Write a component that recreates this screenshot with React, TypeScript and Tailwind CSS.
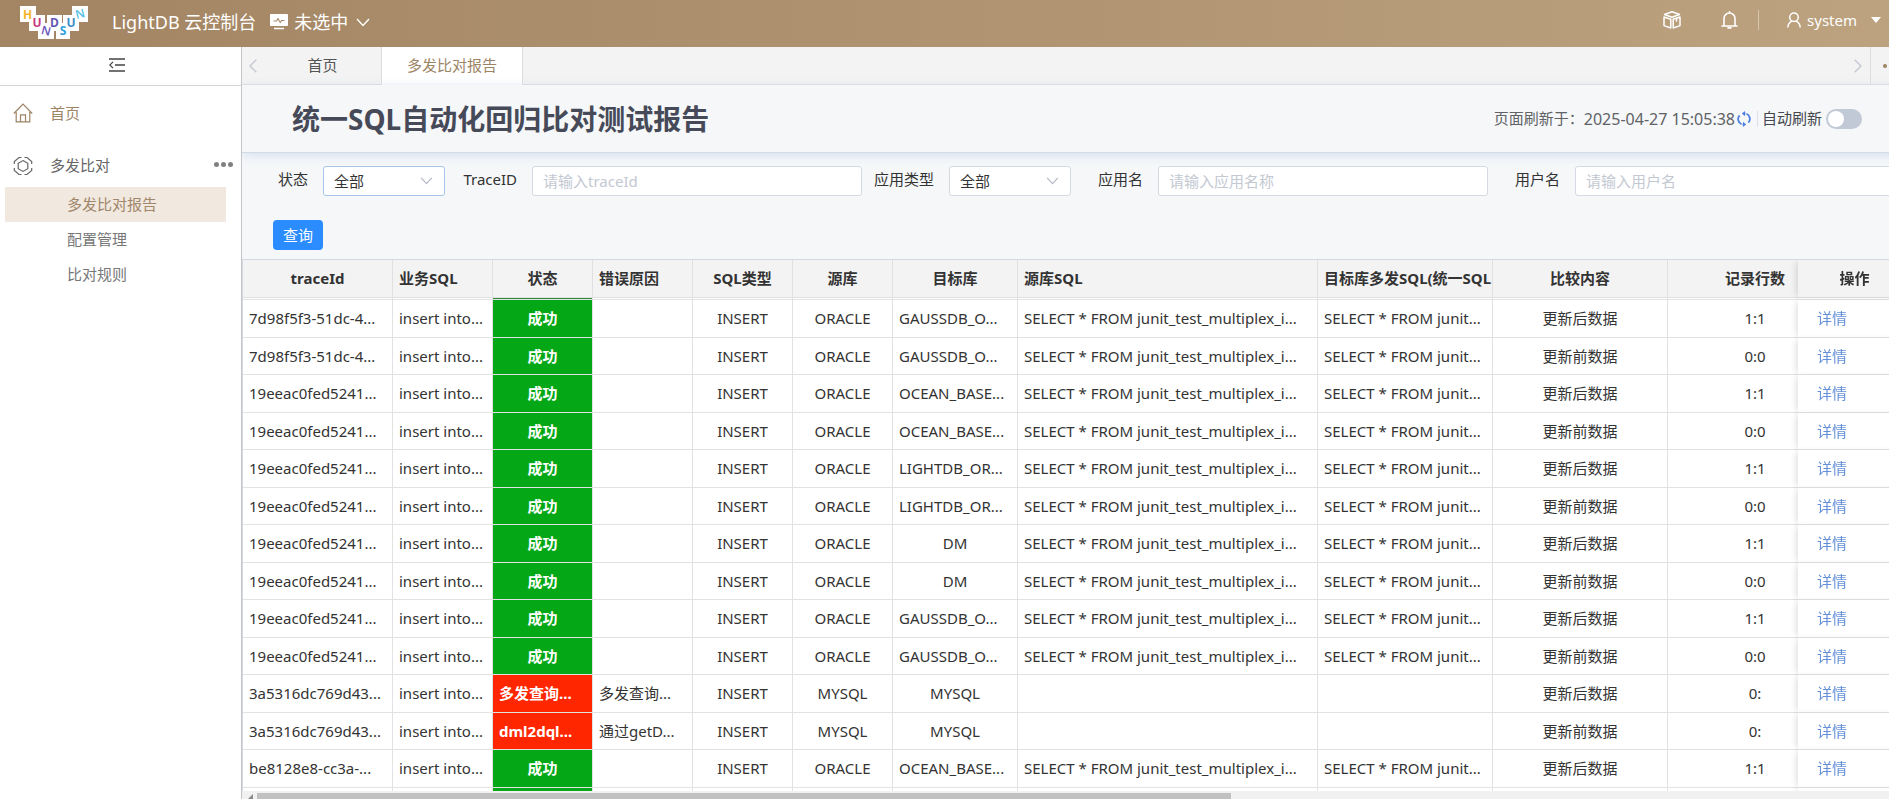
import { useState } from "react";
import type { ReactNode } from "react";

type Row = {
  traceId: string;
  status: string;
  reason?: string;
  source: string;
  target: string;
  compare: string;
  count: string;
};

const AFTER = "更新后数据";
const BEFORE = "更新前数据";

const rows: Row[] = [
  { traceId: "7d98f5f3-51dc-4...", status: "成功", source: "ORACLE", target: "GAUSSDB_O...", compare: AFTER, count: "1:1" },
  { traceId: "7d98f5f3-51dc-4...", status: "成功", source: "ORACLE", target: "GAUSSDB_O...", compare: BEFORE, count: "0:0" },
  { traceId: "19eeac0fed5241...", status: "成功", source: "ORACLE", target: "OCEAN_BASE...", compare: AFTER, count: "1:1" },
  { traceId: "19eeac0fed5241...", status: "成功", source: "ORACLE", target: "OCEAN_BASE...", compare: BEFORE, count: "0:0" },
  { traceId: "19eeac0fed5241...", status: "成功", source: "ORACLE", target: "LIGHTDB_OR...", compare: AFTER, count: "1:1" },
  { traceId: "19eeac0fed5241...", status: "成功", source: "ORACLE", target: "LIGHTDB_OR...", compare: BEFORE, count: "0:0" },
  { traceId: "19eeac0fed5241...", status: "成功", source: "ORACLE", target: "DM", compare: AFTER, count: "1:1" },
  { traceId: "19eeac0fed5241...", status: "成功", source: "ORACLE", target: "DM", compare: BEFORE, count: "0:0" },
  { traceId: "19eeac0fed5241...", status: "成功", source: "ORACLE", target: "GAUSSDB_O...", compare: AFTER, count: "1:1" },
  { traceId: "19eeac0fed5241...", status: "成功", source: "ORACLE", target: "GAUSSDB_O...", compare: BEFORE, count: "0:0" },
  { traceId: "3a5316dc769d43...", status: "多发查询...", reason: "多发查询...", source: "MYSQL", target: "MYSQL", compare: AFTER, count: "0:" },
  { traceId: "3a5316dc769d43...", status: "dml2dql...", reason: "通过getD...", source: "MYSQL", target: "MYSQL", compare: BEFORE, count: "0:" },
  { traceId: "be8128e8-cc3a-...", status: "成功", source: "ORACLE", target: "OCEAN_BASE...", compare: AFTER, count: "1:1" },
];

const columns = [
  { title: "traceId", col: "w-[150px]", align: "text-center" },
  { title: "业务SQL", col: "w-[100px]", align: "text-left" },
  { title: "状态", col: "w-[100px]", align: "text-center" },
  { title: "错误原因", col: "w-[100px]", align: "text-left" },
  { title: "SQL类型", col: "w-[100px]", align: "text-center" },
  { title: "源库", col: "w-[100px]", align: "text-center" },
  { title: "目标库", col: "w-[125px]", align: "text-center" },
  { title: "源库SQL", col: "w-[300px]", align: "text-left" },
  { title: "目标库多发SQL(统一SQL", col: "w-[175px]", align: "text-left" },
  { title: "比较内容", col: "w-[175px]", align: "text-center" },
  { title: "记录行数", col: "w-[175px]", align: "text-center" },
];

// a shortened value fills its cell, so it starts at the left edge
const centered = (text: string) => (text.endsWith("...") ? "text-left" : "text-center");

const Logo = () => (
  <svg width="68" height="33" viewBox="0 0 68 33" aria-label="HUNDSUN" className="shrink-0">
    <g fill="#fff">
      <rect x="0" y="0" width="16" height="16" />
      <rect x="9" y="9" width="16" height="16" />
      <rect x="18" y="17" width="16" height="16" />
      <rect x="27" y="9" width="15" height="16" />
      <rect x="36" y="17" width="14" height="16" />
      <rect x="43" y="9" width="16" height="16" />
      <rect x="52" y="0" width="16" height="16" />
    </g>
    <g fontFamily="Open Sans, sans-serif" fontWeight="700" fontSize="12" textAnchor="middle">
      <text x="7.500" y="13" fill="#f6b62c">H</text>
      <text x="17" y="21" fill="#c8397f">U</text>
      <text x="26" y="29" fontWeight="600" fill="#6c55b8" transform="rotate(14 26 25)">N</text>
      <text x="34.500" y="21" fill="#6457b4">D</text>
      <text x="43" y="29" fill="#2ea1dc">S</text>
      <text x="51" y="21" fill="#3b8ec8">U</text>
      <text x="60" y="12" fontWeight="600" fill="#55c2e6" transform="rotate(-14 60 8)">N</text>
    </g>
  </svg>
);

const ChevronDown = ({ className }: { className: string }) => (
  <svg viewBox="0 0 14 9" fill="none" stroke="currentColor" strokeWidth="1.4" className={className}>
    <path d="M1 1l6 6.5L13 1" />
  </svg>
);

const Header = () => (
  <header className="flex h-[47px] shrink-0 items-center bg-linear-to-r from-[#a38563] to-[#bca27f] pl-5 pr-2 text-white">
    <div className="flex items-center pb-[3px]">
      <Logo />
      <h1 className="ml-6 text-[18px] leading-6">LightDB 云控制台</h1>
      <button className="ml-3.5 flex items-center text-[18px] leading-6">
        <svg width="18" height="16" viewBox="0 0 18 16" className="mr-1.5">
          <rect width="18" height="12" rx="1" fill="#fff" />
          <path d="M3.500 7h3l1.500-2.500 2.200 4 1.300-2h3" fill="none" stroke="#a78967" strokeWidth="1.100" />
          <path d="M4 14.500h10" stroke="#fff" strokeWidth="1.500" />
        </svg>
        未选中
        <ChevronDown className="ml-2 h-[9px] w-[14px]" />
      </button>
    </div>
    <div className="ml-auto flex items-center pb-[7px]">
      <button aria-label="资源">
        <svg width="18" height="18" viewBox="0 0 18 18" fill="none" stroke="#fff" strokeWidth="1.500" strokeLinejoin="round">
          <path d="M9 .8l7.500 2.700L9 6.200 1.500 3.500z" />
          <path d="M1 6l6.800 2.300V17L1 14.600zM17 6l-6.800 2.300V17L17 14.600z" />
          <path d="M13.500 7.200v3.500" />
        </svg>
      </button>
      <button aria-label="通知" className="ml-10">
        <svg width="17" height="18" viewBox="0 0 17 18" fill="none" stroke="#fff" strokeWidth="1.600" strokeLinecap="round">
          <path d="M8.500 .8v1.200M3 14.800V7.500a5.500 5.500 0 0 1 11 0v7.300M1 15h15M7 16.900h3" />
        </svg>
      </button>
      <span className="ml-5 h-5 w-px bg-white/40" />
      <button className="ml-7 flex items-center text-[15px] leading-5">
        <svg width="14" height="16" viewBox="0 0 14 16" fill="none" stroke="#fff" strokeWidth="1.500" strokeLinecap="round" className="mr-1.5">
          <circle cx="7" cy="5.200" r="4.300" />
          <path d="M4.800 9.200C2.600 10.300 1 12 .9 15M9.200 9.200c2.200 1.100 3.800 2.800 3.900 5.800" />
        </svg>
        system
        <svg width="10" height="6" viewBox="0 0 10 6" className="ml-3.5">
          <path d="M0 0h10L5 6z" fill="#fff" />
        </svg>
      </button>
    </div>
  </header>
);

const MenuIcon = ({ children }: { children: ReactNode }) => (
  <svg width="20" height="20" viewBox="0 0 20 20" fill="none" stroke="currentColor" strokeWidth="1.200" className="mr-[17px] shrink-0">
    {children}
  </svg>
);

const Sidebar = () => (
  <aside className="w-[242px] shrink-0 border-r border-[#c4c5c9] bg-white text-[15px] text-[#666]">
    <div className="flex h-[39px] items-center justify-center border-b border-[#d6d6d6] pb-0.5">
      <button aria-label="收起菜单" className="text-[#444]">
        <svg width="16" height="14" viewBox="0 0 16 14" fill="none" stroke="currentColor" strokeWidth="1.400" className="-ml-2">
          <path d="M0 1h16M6 7h10M0 13h16" />
          <path d="M4 3.800L.8 7 4 10.200" strokeWidth="1.200" />
        </svg>
      </button>
    </div>
    <nav>
      <a href="#home" className="flex h-[54px] items-center pl-[13px] text-[#9c8465]">
        <MenuIcon>
          <path d="M.8 10.500L10 1.200l9.200 9.300M3.200 9v9.800h13.600V9M7.500 18.800v-7h5v7" />
        </MenuIcon>
        首页
      </a>
      <a href="#compare" className="flex h-[47px] items-center pl-[13px] pr-2 pt-1">
        <MenuIcon>
          <path d="M10 4.600l4.800 2.700v5.400L10 15.400l-4.800-2.700V7.300z" />
          <path d="M1.300 8V5.500L6 1.500h2.500M11.500 1.500H14l4.700 4V8M18.700 12v2.500l-4.700 4h-2.500M8.500 18.500H6l-4.700-4V12" />
        </MenuIcon>
        多发比对
        <span className="ml-auto flex gap-0.5 pb-0.5">
          <i className="size-[5px] rounded-full bg-[#808080]" />
          <i className="size-[5px] rounded-full bg-[#808080]" />
          <i className="size-[5px] rounded-full bg-[#808080]" />
        </span>
      </a>
      <a href="#report" className="ml-[5px] mr-[15px] flex h-[35px] items-center bg-[#f1e8df] pl-[62px] text-[#a0866a]">
        多发比对报告
      </a>
      <a href="#config" className="flex h-[35px] items-center pl-[67px] text-[#777]">配置管理</a>
      <a href="#rules" className="flex h-[35px] items-center pl-[67px] text-[#777]">比对规则</a>
    </nav>
  </aside>
);

const Tabs = () => (
  <div className="flex h-[38px] bg-[#f3f3f3] text-[15px]">
    <button aria-label="向左" className="flex w-[26px] items-center border-b border-[#dcdcdc] pl-[7px]">
      <svg width="8" height="14" viewBox="0 0 8 14" fill="none" stroke="#c3c8d2" strokeWidth="1.400">
        <path d="M7.300 .8L1 7l6.300 6.200" />
      </svg>
    </button>
    <button className="w-[114px] border-b border-r border-[#dcdcdc] pr-1 text-[#555]">首页</button>
    <button className="w-[141px] border-r border-[#dcdcdc] bg-white pb-px text-[#9c8465]">多发比对报告</button>
    <div className="flex-1 border-b border-[#dcdcdc]" />
    <button aria-label="向右" className="flex w-4 items-center border-b border-[#dcdcdc]">
      <svg width="8" height="14" viewBox="0 0 8 14" fill="none" stroke="#c3c8d2" strokeWidth="1.400">
        <path d="M.7 .8L7 7 .7 13.200" />
      </svg>
    </button>
    <button aria-label="更多" className="flex w-[41px] items-center gap-[3px] border-b border-l border-[#dcdcdc] pl-3">
      <i className="size-1 rounded-full bg-[#9c8465]" />
      <i className="size-1 rounded-full bg-[#9c8465]" />
      <i className="size-1 rounded-full bg-[#9c8465]" />
    </button>
  </div>
);

const TitleBar = () => {
  const [auto, setAuto] = useState(false);

  return (
    <div className="relative z-10 flex h-[68px] items-center border-b border-[#d5dbe5] bg-[#f5f7f9] pl-[50px] pr-[49px] text-[15px] text-[#606266] shadow-[0_2px_10px_#d3dfef]">
      <h2 className="text-[28px] font-bold leading-9 text-[#464a58]">统一SQL自动化回归比对测试报告</h2>
      <span className="ml-auto">页面刷新于：</span>
      <span className="text-[16px]">2025-04-27 15:05:38</span>
      <button aria-label="刷新" className="ml-0.5">
        <svg width="14" height="16" viewBox="0 0 14 16" fill="none" stroke="#4f80e0" strokeWidth="1.800">
          <path d="M4.500 13.200A5.600 5.600 0 0 1 2.600 4.300M9.500 2.800a5.600 5.600 0 0 1 1.900 8.900M7 2.600a6 6 0 0 1 1.500.1M7 13.400a6 6 0 0 1-1.500-.1" />
          <path d="M8 0v5.200L4.800 2.600zM6 16v-5.200l3.200 2.600z" fill="#4f80e0" stroke="none" />
        </svg>
      </button>
      <span className="ml-1.5 mr-1 h-4 w-px bg-[#dcdfe6]" />
      <label htmlFor="auto" className="text-[#45474d]">自动刷新</label>
      <input
        id="auto"
        type="checkbox"
        role="switch"
        checked={auto}
        onChange={(e) => setAuto(e.target.checked)}
        className="ml-1 h-5 w-9 appearance-none rounded-full bg-[#c2c9d6] p-0.5 before:block before:size-4 before:rounded-full before:bg-white checked:bg-[#2d8cff] checked:before:ml-4"
      />
    </div>
  );
};

const SelectField = ({ id, label, labelClass, boxClass }: { id: string; label: string; labelClass: string; boxClass: string }) => (
  <div className="flex shrink-0 items-center gap-[15px]">
    <label htmlFor={id} className={`pb-1 ${labelClass}`}>{label}</label>
    <div className="relative">
      <select id={id} className={`h-[30px] w-[122px] appearance-none rounded-[3px] border bg-white pl-2.5 leading-7 text-[#333] ${boxClass}`}>
        <option>全部</option>
      </select>
      <ChevronDown className="pointer-events-none absolute right-3 top-[11px] h-2 w-[13px] text-[#b4bac6]" />
    </div>
  </div>
);

const TextField = ({ id, label, placeholder }: { id: string; label: string; placeholder: string }) => (
  <div className="flex shrink-0 items-center gap-[15px]">
    <label htmlFor={id} className="w-[72px] pb-1 text-right">{label}</label>
    <input
      id={id}
      placeholder={placeholder}
      className="h-[30px] w-[330px] rounded-[3px] border border-[#d5d9e1] bg-white px-2.5 placeholder:text-[#c3c8d2]"
    />
  </div>
);

const Filters = () => (
  <form className="bg-[#f5f7f9] text-[15px] text-[#333]" onSubmit={(e) => e.preventDefault()}>
    <div className="flex pl-9 pt-[13px]">
      <SelectField id="status" label="状态" labelClass="" boxClass="border-[#a9c4e6]" />
      <TextField id="trace" label="TraceID" placeholder="请输入traceId" />
      <SelectField id="appType" label="应用类型" labelClass="w-[72px] text-right" boxClass="border-[#d5d9e1]" />
      <TextField id="app" label="应用名" placeholder="请输入应用名称" />
      <TextField id="user" label="用户名" placeholder="请输入用户名" />
    </div>
    <button className="mb-[9px] ml-[31px] mt-6 h-[30px] w-[50px] rounded-[4px] bg-[#2b8cff] text-white">查询</button>
  </form>
);

const Cell = ({ align, className = "", children }: { align: string; className?: string; children?: ReactNode }) => (
  <td className={`whitespace-nowrap border-b border-r border-[#e2e2e4] px-1.5 pb-px ${align} ${className}`}>{children}</td>
);

const fixedShadow = "shadow-[-4px_0_6px_-2px_rgba(0,0,0,0.12)]";

const ResultTable = () => (
  <div className="min-h-0 flex-1 overflow-hidden border-l border-t border-[#d5d9e1] bg-white">
    <table className="w-[1713px] table-fixed border-separate border-spacing-0 text-[15px] leading-5 text-[#333]">
      <colgroup>
        {columns.map((c) => (
          <col key={c.title} className={c.col} />
        ))}
        <col className="w-[113px]" />
      </colgroup>
      <thead>
        <tr className="h-[38px] bg-[#f3f3f3]">
          {columns.map((c) => (
            <th key={c.title} className={`overflow-hidden whitespace-nowrap border-b border-r border-[#e0e0e0] px-1.5 pb-0.5 ${c.align}`}>
              {c.title}
            </th>
          ))}
          <th className={`sticky right-0 border-b border-[#dcdcdc] bg-[#f3f3f3] pb-0.5 text-center ${fixedShadow}`}>操作</th>
        </tr>
      </thead>
      <tbody>
        <tr aria-hidden="true" className="h-0.5">
          {columns.map((c) => (
            <td
              key={c.title}
              className={`border-b border-r border-[#e2e2e4] p-0 ${c.title === "状态" ? "bg-[#2f8a3c]" : ""}`}
            />
          ))}
          <td className="sticky right-0 border-b border-[#e2e2e4] bg-white p-0" />
        </tr>
        {rows.map((r, i) => {
          const ok = r.status === "成功";
          const hasSql = r.source === "ORACLE";
          return (
            <tr key={i} className="h-[37px] even:h-[38px]">
              <Cell align="text-left">{r.traceId}</Cell>
              <Cell align="text-left">insert into...</Cell>
              <Cell
                align={centered(r.status)}
                className={ok ? "bg-[#04a817] font-bold text-white" : "bg-[#ff2600] font-bold text-white"}
              >
                {r.status}
              </Cell>
              <Cell align="text-left">{r.reason}</Cell>
              <Cell align="text-center">INSERT</Cell>
              <Cell align="text-center">{r.source}</Cell>
              <Cell align={centered(r.target)}>{r.target}</Cell>
              <Cell align="text-left">{hasSql && "SELECT * FROM junit_test_multiplex_i..."}</Cell>
              <Cell align="text-left">{hasSql && "SELECT * FROM junit..."}</Cell>
              <Cell align="text-center">{r.compare}</Cell>
              <Cell align="text-center">{r.count}</Cell>
              <td className={`sticky right-0 border-b border-[#e2e2e4] bg-white pb-px pl-[19px] ${fixedShadow}`}>
                <a href="#detail" className="text-[#6390d8]">详情</a>
              </td>
            </tr>
          );
        })}
        {/* top of the next row, cut by the scroll bar */}
        <tr aria-hidden="true" className="h-[38px]">
          {columns.map((c) => (
            <td key={c.title} className={`border-r border-[#e2e2e4] p-0 ${c.title === "状态" ? "bg-[#04a817]" : ""}`} />
          ))}
          <td className={`sticky right-0 bg-white p-0 ${fixedShadow}`} />
        </tr>
      </tbody>
    </table>
  </div>
);

const ScrollTrack = () => (
  <div className="flex h-2 shrink-0 items-end bg-[#f1f1f1]">
    <svg width="15" height="5" viewBox="0 0 15 5">
      <path d="M11 0v5H6z" fill="#8a8a8a" />
    </svg>
    <div className="h-1.5 w-7/12 bg-[#c1c1c1]" />
  </div>
);

export default function App() {
  return (
    <div className="flex h-screen flex-col overflow-hidden bg-white font-['Noto_Sans','Noto_Sans_CJK_SC',sans-serif]">
      <Header />
      <div className="flex min-h-0 flex-1">
        <Sidebar />
        {/* the content runs a little past the right edge of the window */}
        <main className="-mr-[22px] flex min-w-0 flex-1 flex-col overflow-hidden">
          <Tabs />
          <TitleBar />
          <Filters />
          <ResultTable />
          <ScrollTrack />
        </main>
      </div>
    </div>
  );
}
